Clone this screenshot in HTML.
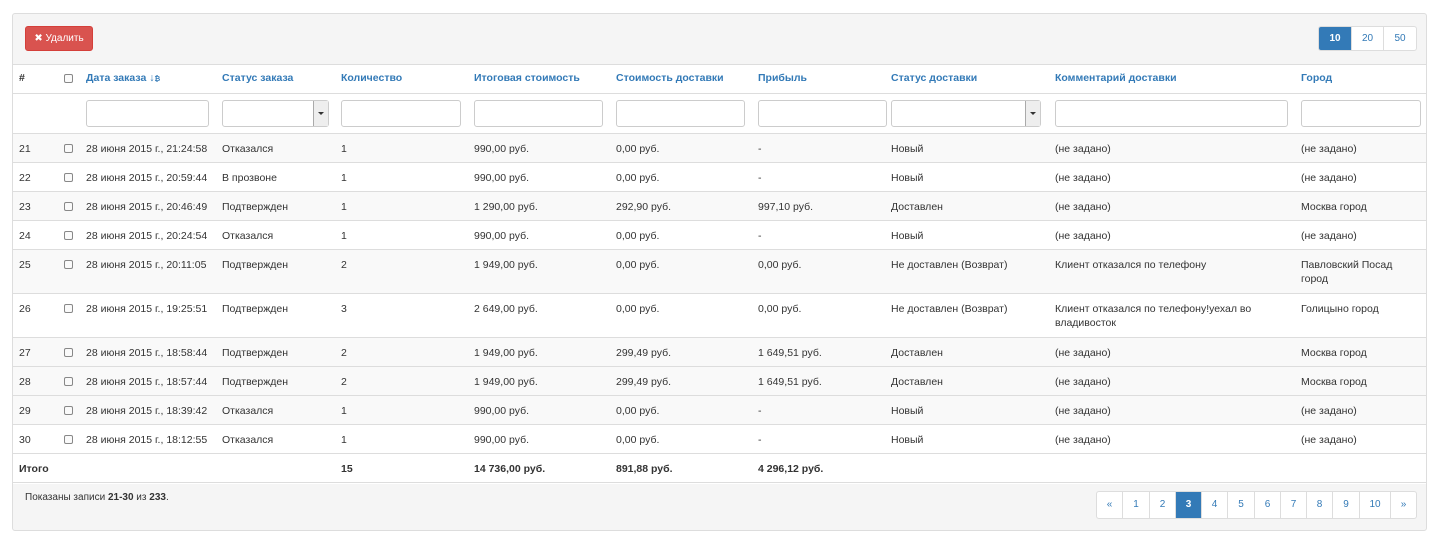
<!DOCTYPE html>
<html><head><meta charset="utf-8">
<style>
*{box-sizing:border-box}
body{margin:0;background:#fff;font-family:"Liberation Sans",Arial,sans-serif;font-size:10.5px;color:#333}
.panel{position:absolute;left:12px;top:13px;width:1415px;height:518px;border:1px solid #ddd;border-radius:3px;background:#f5f5f5;overflow:hidden}
.btn-del{position:absolute;left:12px;top:12px;width:68px;height:25px;background:#d9534f;border:1px solid #d43f3a;border-radius:3px;color:#fff;font-size:10px;line-height:23px;text-align:center}
.ps{position:absolute;left:1305px;top:12px;height:25px;display:flex;border:1px solid #ddd;border-radius:3px;overflow:hidden;background:#fff}
.ps div{height:23px;line-height:23px;text-align:center;color:#337ab7;font-size:10px;border-left:1px solid #ddd}
.ps div:first-child{border-left:none}
table{position:absolute;left:-1px;top:50px;border-collapse:collapse;table-layout:fixed;width:1415px;background:#fff}
td,th{padding:0 0 0 7px;text-align:left;vertical-align:top;border-top:1px solid #ddd;white-space:nowrap;overflow:visible}
th{color:#337ab7;font-weight:bold;height:27px;line-height:27px;border-top:1px solid #ddd;border-bottom:1px solid #ddd}
th.h{color:#333}
td{height:29px;padding-top:8px;line-height:14px}
tr.tall td{height:44px}
tr.s td{background:#f9f9f9}
tr.f td{height:40px;padding-top:6px;border-top:none}
.in{height:27px;border:1px solid #ccc;border-radius:3px;background:#fff;width:calc(100% - 6px);position:relative}
.sel::after{content:"";position:absolute;right:0;top:0;width:14px;height:25px;background:#eee;border-left:1px solid #aaa}
.sel::before{content:"";position:absolute;right:4px;top:11px;border:3px solid transparent;border-top:3px solid #333;z-index:2}
.cb{display:inline-block;width:9px;height:9px;border:1px solid #888;border-radius:2px;background:#fafafa;margin-top:2px}
tr.t td{font-weight:bold}
.sum{position:absolute;left:12px;top:478px;font-size:10px}
.pg{position:absolute;left:1083px;top:477px;height:28px;display:flex;border:1px solid #ddd;border-radius:3px;background:#fff;overflow:hidden}
.pg div{height:26px;line-height:26px;text-align:center;color:#337ab7;font-size:10px;border-left:1px solid #ddd}
.pg div:first-child{border-left:none}
.act{background:#337ab7;color:#fff!important;font-weight:bold}
</style></head><body>
<div class="panel">
<div class="btn-del">✖ Удалить</div>
<div class="ps"><div class="act" style="width:32px">10</div><div style="width:32px">20</div><div style="width:33px">50</div></div>
<table>
<colgroup><col style="width:45px"><col style="width:22px"><col style="width:136px"><col style="width:119px"><col style="width:133px"><col style="width:142px"><col style="width:142px"><col style="width:133px"><col style="width:164px"><col style="width:246px"><col style="width:133px"></colgroup>
<tr><th class="h">#</th><th><span class="cb" style="margin-top:0;vertical-align:middle"></span></th><th>Дата заказа ↓<span style="font-size:7px">₿</span></th><th>Статус заказа</th><th>Количество</th><th>Итоговая стоимость</th><th>Стоимость доставки</th><th>Прибыль</th><th>Статус доставки</th><th>Комментарий доставки</th><th>Город</th></tr>
<tr class="f"><td></td><td></td><td><div class="in" style="width:123px"></div></td><td><div class="in sel" style="width:107px"></div></td><td><div class="in" style="width:120px"></div></td><td><div class="in" style="width:129px"></div></td><td><div class="in" style="width:129px"></div></td><td><div class="in" style="width:129px"></div></td><td><div class="in sel" style="width:150px"></div></td><td><div class="in" style="width:233px"></div></td><td><div class="in" style="width:120px"></div></td></tr>
<tr class="s"><td>21</td><td><span class="cb"></span></td><td>28 июня 2015 г., 21:24:58</td><td>Отказался</td><td>1</td><td>990,00 руб.</td><td>0,00 руб.</td><td>-</td><td>Новый</td><td>(не задано)</td><td>(не задано)</td></tr>
<tr><td>22</td><td><span class="cb"></span></td><td>28 июня 2015 г., 20:59:44</td><td>В прозвоне</td><td>1</td><td>990,00 руб.</td><td>0,00 руб.</td><td>-</td><td>Новый</td><td>(не задано)</td><td>(не задано)</td></tr>
<tr class="s"><td>23</td><td><span class="cb"></span></td><td>28 июня 2015 г., 20:46:49</td><td>Подтвержден</td><td>1</td><td>1 290,00 руб.</td><td>292,90 руб.</td><td>997,10 руб.</td><td>Доставлен</td><td>(не задано)</td><td>Москва город</td></tr>
<tr><td>24</td><td><span class="cb"></span></td><td>28 июня 2015 г., 20:24:54</td><td>Отказался</td><td>1</td><td>990,00 руб.</td><td>0,00 руб.</td><td>-</td><td>Новый</td><td>(не задано)</td><td>(не задано)</td></tr>
<tr class="s tall"><td>25</td><td><span class="cb"></span></td><td>28 июня 2015 г., 20:11:05</td><td>Подтвержден</td><td>2</td><td>1 949,00 руб.</td><td>0,00 руб.</td><td>0,00 руб.</td><td>Не доставлен (Возврат)</td><td>Клиент отказался по телефону</td><td>Павловский Посад<br>город</td></tr>
<tr class="tall"><td>26</td><td><span class="cb"></span></td><td>28 июня 2015 г., 19:25:51</td><td>Подтвержден</td><td>3</td><td>2 649,00 руб.</td><td>0,00 руб.</td><td>0,00 руб.</td><td>Не доставлен (Возврат)</td><td>Клиент отказался по телефону!уехал во<br>владивосток</td><td>Голицыно город</td></tr>
<tr class="s"><td>27</td><td><span class="cb"></span></td><td>28 июня 2015 г., 18:58:44</td><td>Подтвержден</td><td>2</td><td>1 949,00 руб.</td><td>299,49 руб.</td><td>1 649,51 руб.</td><td>Доставлен</td><td>(не задано)</td><td>Москва город</td></tr>
<tr class="s"><td>28</td><td><span class="cb"></span></td><td>28 июня 2015 г., 18:57:44</td><td>Подтвержден</td><td>2</td><td>1 949,00 руб.</td><td>299,49 руб.</td><td>1 649,51 руб.</td><td>Доставлен</td><td>(не задано)</td><td>Москва город</td></tr>
<tr class="s"><td>29</td><td><span class="cb"></span></td><td>28 июня 2015 г., 18:39:42</td><td>Отказался</td><td>1</td><td>990,00 руб.</td><td>0,00 руб.</td><td>-</td><td>Новый</td><td>(не задано)</td><td>(не задано)</td></tr>
<tr><td>30</td><td><span class="cb"></span></td><td>28 июня 2015 г., 18:12:55</td><td>Отказался</td><td>1</td><td>990,00 руб.</td><td>0,00 руб.</td><td>-</td><td>Новый</td><td>(не задано)</td><td>(не задано)</td></tr>
<tr class="t"><td colspan="4">Итого</td><td>15</td><td>14 736,00 руб.</td><td>891,88 руб.</td><td>4 296,12 руб.</td><td></td><td></td><td></td></tr>
<tr><td colspan="11" style="height:1px;padding:0"></td></tr>
</table>
<div class="sum">Показаны записи <b>21-30</b> из <b>233</b>.</div>
<div class="pg"><div style="width:25px">«</div><div style="width:27px">1</div><div style="width:26px">2</div><div class="act" style="width:26px">3</div><div style="width:26px">4</div><div style="width:27px">5</div><div style="width:26px">6</div><div style="width:26px">7</div><div style="width:26px">8</div><div style="width:27px">9</div><div style="width:31px">10</div><div style="width:26px">»</div></div>
</div>
</body></html>
